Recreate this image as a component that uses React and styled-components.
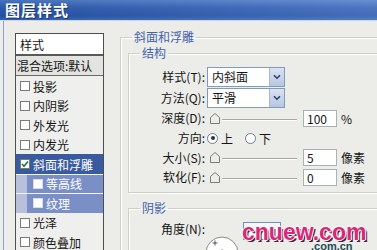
import styled, { createGlobalStyle } from 'styled-components'

const GlobalStyle = createGlobalStyle`
  html, body {
    margin: 0;
    padding: 0;
    background: #ecece8;
    overflow: hidden;
  }
  body {
    font-family: 'Noto Sans CJK SC', 'Noto Sans', sans-serif;
    font-size: 12px;
    color: #151515;
  }
`

const Window = styled.div`
  position: relative;
  width: 377px;
  height: 250px;
  overflow: hidden;
  display: flex;
  flex-direction: column;
  background: #ecece8;
`

const TitleBar = styled.div`
  height: 20px;
  flex: none;
  display: flex;
  align-items: center;
  padding-left: 5px;
  background:
    linear-gradient(to right, rgba(0, 0, 0, 0.08), rgba(255, 255, 255, 0.14)),
    linear-gradient(to bottom, #4f7dcb 0%, #2e5eb5 40%, #2455ac 80%, #3a68ba 100%);
  border-bottom: 1px solid #c9d4e8;
`

const TitleText = styled.span`
  color: #fff;
  font-size: 15px;
  font-weight: 700;
  letter-spacing: 1px;
  line-height: 18px;
  text-shadow: 1px 1px 0 #1b366f;
`

const Body = styled.div`
  flex: 1;
  min-height: 0;
  display: flex;
  align-items: flex-start;
  margin-left: 3px;
  border-left: 1px solid #8aa2cc;
  padding: 8px 0 0 11px;
`

/* ---------- left style list ---------- */

const List = styled.div`
  flex: none;
  width: 89px;
  height: 230px;
  margin-top: 4px;
  box-sizing: border-box;
  border: 1px solid #4e4e4e;
  border-bottom: none;
  background: #efefed;
  overflow: hidden;
`

const ListHeader = styled.div`
  height: 20px;
  display: flex;
  align-items: center;
  padding-left: 4px;
  background: #fff;
  border-bottom: 2px solid #595959;
`

const BlendRow = styled.div`
  height: 19px;
  display: flex;
  align-items: center;
  padding-left: 1px;
  background: #e3e3e0;
  border-bottom: 1px solid #6a6a6a;
  white-space: nowrap;
`

const itemBackground = {
  plain: '#efefed',
  selected: '#3a5a9f',
  sub: 'linear-gradient(to right, #b8c1dc 11px, #7a8fc6 11px)',
}

const Item = styled.div`
  height: 19.5px;
  box-sizing: border-box;
  display: flex;
  align-items: center;
  padding-left: ${p => (p.$kind === 'sub' ? 17 : 4)}px;
  background: ${p => itemBackground[p.$kind]};
  color: ${p => (p.$kind === 'plain' ? '#151515' : '#fff')};
  border-top: 1px solid ${p => (p.$kind === 'sub' ? '#f4f5fa' : 'transparent')};
  white-space: nowrap;
`

const Box = styled.span`
  flex: none;
  width: 10px;
  height: 10px;
  box-sizing: border-box;
  margin-right: 3px;
  border: 1px solid ${p => (p.$light ? '#d8dcea' : '#7a7a7a')};
  background: #fff;
  display: flex;
  align-items: center;
  justify-content: center;
`

const Check = ({ checked, light }) => (
  <Box $light={light}>
    {checked && (
      <svg width="8" height="8" viewBox="0 0 8 8">
        <path d="M1 4 L3 6.2 L7 1.5" fill="none" stroke="#1f7a2e" strokeWidth="1.6" />
      </svg>
    )}
  </Box>
)

/* ---------- right panel ---------- */

const RightPane = styled.div`
  flex: none;
  margin-left: 16px;
`

const Group = styled.fieldset`
  margin: ${p => p.$margin || '0'};
  padding: ${p => p.$padding || '0'};
  width: ${p => p.$width}px;
  height: ${p => (p.$height ? `${p.$height}px` : 'auto')};
  min-width: 0;
  border: 1px solid #cfcfc6;
  box-shadow: inset 1px 1px 0 #fff, 1px 1px 0 #fff;
`

const Legend = styled.legend`
  margin-left: ${p => p.$offset}px;
  padding: 0 2px;
  color: #4262ad;
  font-size: 12px;
  line-height: 16px;
`

const Row = styled.div`
  height: ${p => p.$h || 20}px;
  margin-top: ${p => p.$gap || 0}px;
  display: flex;
  align-items: ${p => p.$align || 'center'};
`

const Label = styled.span`
  flex: none;
  width: 76px;
  text-align: right;
  white-space: nowrap;
  line-height: 20px;
`

const Select = styled.div`
  margin-left: 2px;
  width: 78px;
  height: 20px;
  box-sizing: border-box;
  display: flex;
  border: 1px solid #7f9db9;
  background: #fff;
`

const SelectText = styled.span`
  flex: 1;
  padding-left: 4px;
  line-height: 18px;
`

const DropButton = styled.span`
  width: 14px;
  display: flex;
  align-items: center;
  justify-content: center;
  border-left: 1px solid #a9b7d2;
  background: linear-gradient(to bottom, #dbe3f2, #b7c6e2);
`

const Chevron = () => (
  <svg width="8" height="6" viewBox="0 0 8 6">
    <path d="M1 1.2 L4 4.2 L7 1.2" fill="none" stroke="#2a3f6c" strokeWidth="1.6" />
  </svg>
)

const Slider = styled.div`
  margin-left: 2px;
  width: 90px;
  padding-left: 3px;
  box-sizing: border-box;
  display: flex;
  align-items: center;
`

const Track = styled.span`
  flex: 1;
  height: 0;
  margin-left: 2px;
  margin-top: 3px;
  border-top: 1px solid #a9a9a2;
  border-bottom: 1px solid #fff;
`

const Knob = () => (
  <svg width="10" height="11" viewBox="0 0 10 11">
    <path d="M5 0.5 L9.5 4.5 L9.5 10.5 L0.5 10.5 L0.5 4.5 Z" fill="#ededea" stroke="#7a7a76" />
  </svg>
)

const NumberBox = styled.span`
  margin-left: 6px;
  width: 34px;
  height: 17px;
  box-sizing: border-box;
  padding-left: 3px;
  border: 1px solid #a9b0ba;
  background: #fff;
  line-height: 15px;
`

const Unit = styled.span`
  margin-left: 4px;
`

const RadioDot = styled.span`
  flex: none;
  width: 11px;
  height: 11px;
  box-sizing: border-box;
  margin-left: ${p => p.$gap || 0}px;
  margin-right: 3px;
  border-radius: 50%;
  border: 1px solid #6b7c95;
  background: #fff;
  display: flex;
  align-items: center;
  justify-content: center;

  &::after {
    content: '';
    display: ${p => (p.$on ? 'block' : 'none')};
    width: 4px;
    height: 4px;
    border-radius: 50%;
    background: #333;
  }
`

const Dial = styled.svg`
  flex: none;
  margin-top: 17px;
`

const AngleBox = styled.span`
  flex: none;
  margin: 3px 0 0 4px;
  width: 38px;
  height: 18px;
  box-sizing: border-box;
  border: 1px solid #6f8fbf;
  background: #f6f8fc;
`

/* ---------- watermark (overlaid logo) ---------- */

const Watermark = styled.div`
  position: absolute;
  left: 241px;
  top: 224px;
  width: 136px;
  height: 26px;
  pointer-events: none;
  font-family: 'Liberation Sans', sans-serif;
  font-weight: 700;
`

const MarkMain = styled.div`
  height: 17px;
  padding-left: 1px;
  font-size: 23px;
  line-height: 17px;
  color: #d8287a;
  text-shadow:
    1px 0 0 #fff, -1px 0 0 #fff, 0 1px 0 #fff, 0 -1px 0 #fff,
    2px 2px 0 #4a1c30;
  white-space: nowrap;
`

const MarkSub = styled.div`
  margin: 1px 0 0 70px;
  font-size: 11px;
  line-height: 8px;
  color: #1f4a56;
  white-space: nowrap;
`

const items = [
  { text: '投影', kind: 'plain' },
  { text: '内阴影', kind: 'plain' },
  { text: '外发光', kind: 'plain' },
  { text: '内发光', kind: 'plain' },
  { text: '斜面和浮雕', kind: 'selected', checked: true },
  { text: '等高线', kind: 'sub' },
  { text: '纹理', kind: 'sub' },
  { text: '光泽', kind: 'plain' },
  { text: '颜色叠加', kind: 'plain' },
]

export default function App() {
  return (
    <Window>
      <GlobalStyle />
      <TitleBar>
        <TitleText>图层样式</TitleText>
      </TitleBar>
      <Body>
        <List>
          <ListHeader>样式</ListHeader>
          <BlendRow>混合选项:默认</BlendRow>
          {items.map(item => (
            <Item key={item.text} $kind={item.kind}>
              <Check checked={item.checked} light={item.kind === 'sub'} />
              {item.text}
            </Item>
          ))}
        </List>

        <RightPane>
          <Group $padding="0 0 0 7px" $width={300} $height={260}>
            <Legend $offset={4}>斜面和浮雕</Legend>

            <Group $padding="6px 0 5px 0" $width={290}>
              <Legend $offset={11}>结构</Legend>
              <Row>
                <Label>样式(T):</Label>
                <Select>
                  <SelectText>内斜面</SelectText>
                  <DropButton><Chevron /></DropButton>
                </Select>
              </Row>
              <Row $gap={1}>
                <Label>方法(Q):</Label>
                <Select>
                  <SelectText>平滑</SelectText>
                  <DropButton><Chevron /></DropButton>
                </Select>
              </Row>
              <Row>
                <Label>深度(D):</Label>
                <Slider><Knob /><Track /></Slider>
                <NumberBox>100</NumberBox>
                <Unit>%</Unit>
              </Row>
              <Row>
                <Label>方向:</Label>
                <RadioDot $on $gap={2} />上
                <RadioDot $gap={12} />下
              </Row>
              <Row $h={19}>
                <Label>大小(S):</Label>
                <Slider><Knob /><Track /></Slider>
                <NumberBox>5</NumberBox>
                <Unit>像素</Unit>
              </Row>
              <Row>
                <Label>软化(F):</Label>
                <Slider><Knob /><Track /></Slider>
                <NumberBox>0</NumberBox>
                <Unit>像素</Unit>
              </Row>
            </Group>

            <Group $margin="7px 0 0 0" $padding="3px 0 0 0" $width={290} $height={80}>
              <Legend $offset={11}>阴影</Legend>
              <Row $h={60} $align="flex-start">
                <Label>角度(N):</Label>
                <Dial width="34" height="34" viewBox="0 0 34 34">
                  <circle cx="17" cy="17" r="16" fill="#fff" stroke="#8a8a86" />
                  <path d="M10 4.5 V9.5 M7.5 7 H12.5" stroke="#333" strokeWidth="0.8" />
                  <circle cx="17" cy="15" r="1.4" fill="#222" />
                </Dial>
                <AngleBox />
              </Row>
            </Group>
          </Group>
        </RightPane>
      </Body>

      <Watermark>
        <MarkMain>cnuew.com</MarkMain>
        <MarkSub>.com.cn</MarkSub>
      </Watermark>
    </Window>
  )
}
